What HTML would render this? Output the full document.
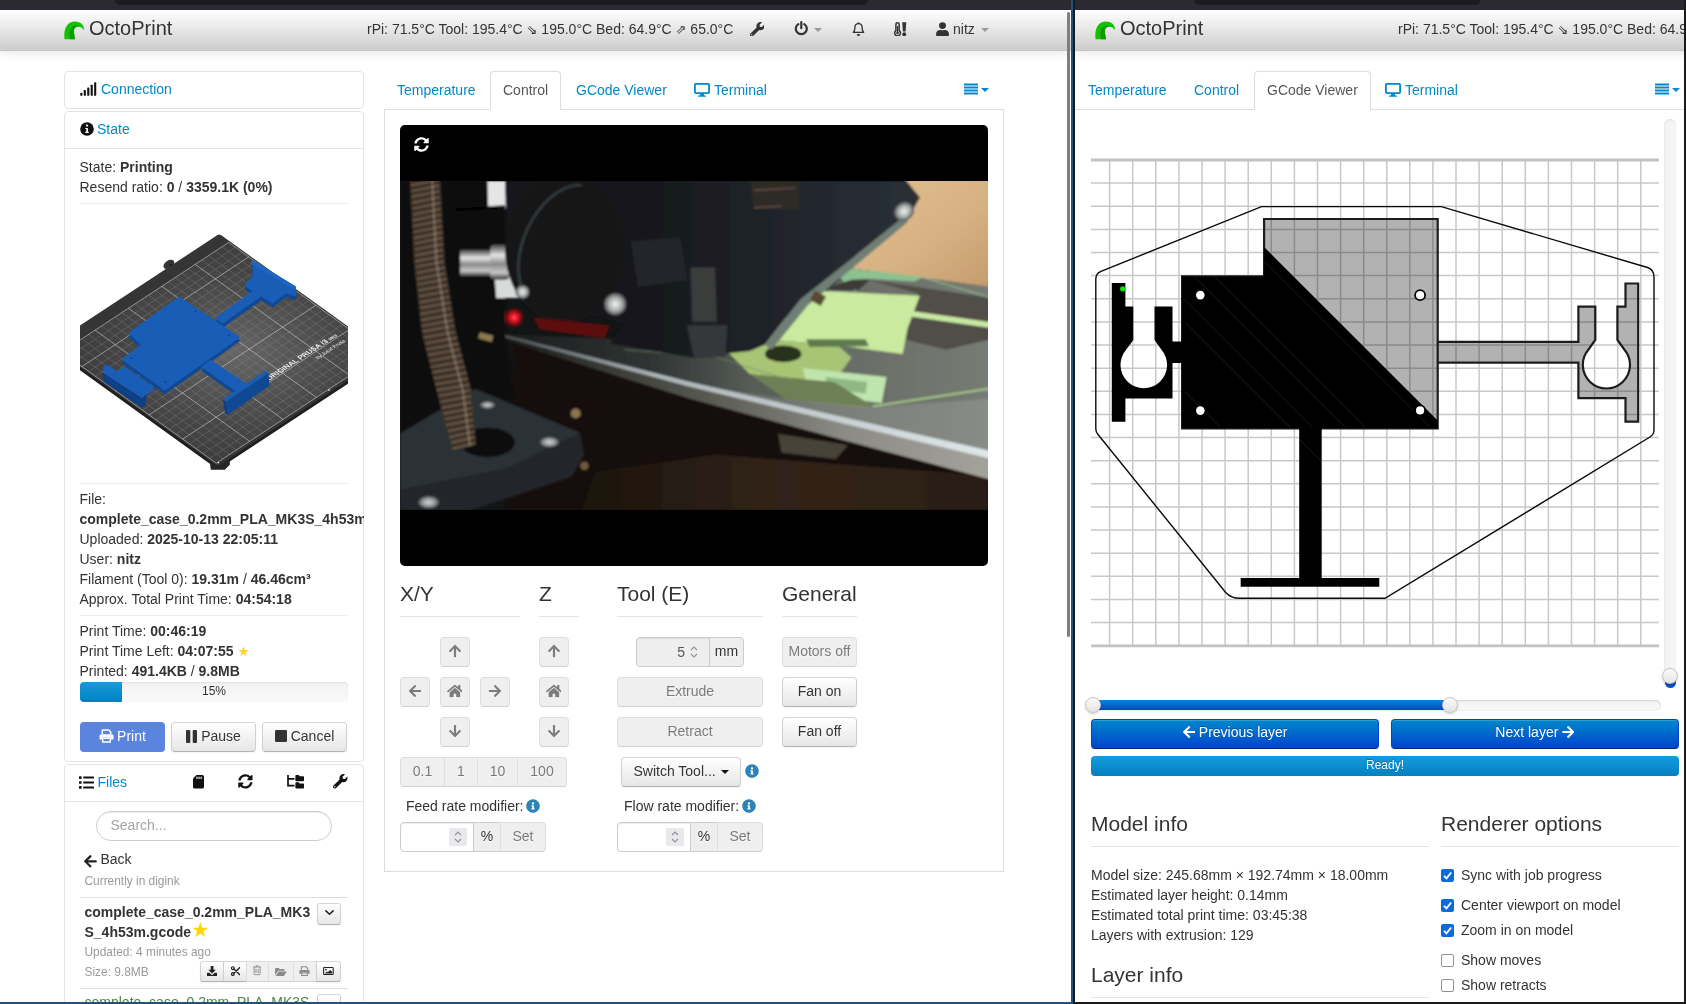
<!DOCTYPE html>
<html lang="en">
<head>
<meta charset="utf-8">
<title>OctoPrint</title>
<style>
*{box-sizing:content-box}
html,body{margin:0;padding:0}
body{width:1686px;height:1004px;overflow:hidden;position:relative;background:#fff;
 font-family:"Liberation Sans",sans-serif;font-size:14px;line-height:20px;color:#333}
a{color:#08c;text-decoration:none}
.abs{position:absolute}
.wrap{position:absolute;width:1686px;height:1004px;will-change:transform}
#chrome-top{left:0;top:0;width:1686px;height:10px;background:#2b2a33}
.ftab{position:absolute;top:0;height:5px;background:#1c1b22;border-radius:0 0 5px 5px}
#L{left:0;top:10px;width:1071px;height:992px;overflow:hidden;background:#fff}
#R{left:1075px;top:10px;width:609px;height:992px;overflow:hidden;background:#fff}
#divblue{left:1071px;top:0;width:2px;height:1004px;background:#24517a}
#divblk{left:1073px;top:0;width:2px;height:1004px;background:#1b1a1a}
#botL{left:0;top:1002px;width:1073px;height:2px;background:#24517a}
#botR{left:1073px;top:1002px;width:613px;height:2px;background:#1b1a1a}
#edgeR{left:1684px;top:0;width:2px;height:1004px;background:#1b1a1a}
/* navbar */
.navbar{position:absolute;top:10px;height:40px;
 background:linear-gradient(to bottom,#ffffff 0%,#cdcdcd 100%);
 border-bottom:1px solid #c6c6c6;box-shadow:0 1px 10px rgba(0,0,0,.12);z-index:5}
.brand{position:absolute;top:0;font-size:20px;line-height:20px;color:#333;white-space:nowrap}
.navtxt{position:absolute;top:9px;white-space:nowrap;color:#333;font-size:14px;line-height:20px}
.ico{position:absolute;display:block}
.arr{font-family:"DejaVu Sans",sans-serif;font-size:13px;line-height:1}
/* sidebar */
.acc{position:absolute;border:1px solid #e5e5e5;border-radius:4px;background:#fff}
.acc-h{position:relative;height:36px}
.acc-h .t{position:absolute;top:8px;white-space:nowrap}
.acc-in{border-top:1px solid #e5e5e5;position:relative}
b,strong{font-weight:bold}
.line{position:absolute;left:15px;white-space:nowrap;height:20px}
.sl{left:79.500px;white-space:nowrap;height:20px}
.shr{left:80px;width:268px;height:0;border-top:1px solid #eee}
.sm{font-size:11.900px;color:#999;white-space:nowrap}
.hr{position:absolute;left:15px;width:268px;height:0;border-top:1px solid #eee}
/* tabs */
.tabs{position:absolute;height:38px;border-bottom:1px solid #ddd}
.tab{position:absolute;top:0;height:36px;padding:0 12px;line-height:36px;border:1px solid transparent;border-radius:4px 4px 0 0;white-space:nowrap}
.tab.active{border-color:#ddd;border-bottom-color:#fff;color:#555;background:#fff;height:37px}
.tabc{position:absolute;border:1px solid #ddd;border-top:0}
.btn{position:absolute;box-sizing:border-box;height:30px;line-height:20px;padding:3px 0 5px;text-align:center;font-size:14px;color:#333;
 text-shadow:0 1px 1px rgba(255,255,255,.75);background:linear-gradient(to bottom,#fff,#e6e6e6);
 border:1px solid #ccc;border-color:#d6d6d6 #d0d0d0 #b3b3b3;border-radius:4px;
 box-shadow:inset 0 1px 0 rgba(255,255,255,.2),0 1px 2px rgba(0,0,0,.05);white-space:nowrap}
.btn.dis{background:#efefef;color:#7a7a7a;box-shadow:none;border-color:#dedede #dedede #cfcfcf;text-shadow:0 1px 1px rgba(255,255,255,.75)}
.btn.pri{padding:2px 0 6px;color:#fff;text-shadow:0 -1px 0 rgba(0,0,0,.25);background:linear-gradient(to bottom,#08c,#04c);border-color:#04c #04c #002a80}
.inp{position:absolute;box-sizing:border-box;height:30px;border:1px solid #ccc;border-radius:4px 0 0 4px;background:#fff;box-shadow:inset 0 1px 1px rgba(0,0,0,.075)}
.inp.dis{background:#eee}
.spbg{position:absolute;top:5px;width:18px;height:18px;background:#e9e9ed;border-radius:2px;z-index:-0}
.inp svg{z-index:2}
.addon{position:absolute;box-sizing:border-box;height:30px;border:1px solid #ccc;background:#eee;text-align:center;line-height:27px;text-shadow:0 1px 0 #fff;color:#333}
.rl{left:1091px;white-space:nowrap;height:20px}
.knob{position:absolute;width:14px;height:14px;border-radius:50%;border:1px solid #c4c4c4;background:linear-gradient(to bottom,#fbfbfb,#e4e4e4);box-shadow:0 1px 2px rgba(0,0,0,.2)}
h1{position:absolute;margin:0;font-size:21px;line-height:35px;font-weight:normal;color:#333;border-bottom:1px solid #e5e5e5;white-space:nowrap;height:40px}
</style>
</head>
<body>
<div id="chrome-top" class="abs"><div class="ftab" style="left:115px;width:753px"></div><div class="ftab" style="left:1194px;width:286px"></div></div>

<!-- ================= LEFT WINDOW ================= -->
<div id="L" class="abs"><div class="wrap" style="left:0;top:-10px">
 <div class="navbar" id="navL" style="left:0;width:1071px">
  <svg class="ico" style="left:64px;top:11px" width="21" height="19" viewBox="0 0 21 19"><path d="M0.6,18.3 C-0.8,8 3,0.6 11,0.4 C16.5,0.3 20.3,4.2 20.3,9.3 C17.6,5.6 14.2,5.2 11.8,6.6 C9.2,8.2 10,12 11.2,18.3 Z" fill="#13c100"/><path d="M6.2,18.3 C4.6,12 5.2,7 9.2,5 C11.2,4 13.4,4 15.4,4.9 C12.2,5 9.8,6.6 9.6,9.2 C9.7,12 10.4,15 11.2,18.3 Z" fill="#0f9b00"/></svg>
  <div class="brand" style="left:89px;top:8px">OctoPrint</div>
  <div class="navtxt" style="left:367px">rPi: 71.5°C Tool: 195.4°C <span class="arr">⇘</span> 195.0°C Bed: 64.9°C <span class="arr">⇗</span> 65.0°C</div>
  <svg class="ico" style="left:749.5px;top:11.8px" width="14.6" height="14.6" viewBox="0 0 512 512"><path fill="#333" d="M507.73 109.1c-2.24-9.03-13.54-12.09-20.12-5.51l-74.36 74.36-67.88-11.31-11.31-67.88 74.36-74.36c6.62-6.62 3.43-17.9-5.66-20.16-47.38-11.74-99.55.91-136.58 37.93-39.64 39.64-50.55 97.1-34.05 147.2L18.74 402.76c-24.99 24.99-24.99 65.51 0 90.5 24.99 24.99 65.51 24.99 90.5 0l213.21-213.21c50.12 16.71 107.47 5.68 147.37-34.22 37.07-37.07 49.7-89.32 37.91-136.73zM64 472c-13.25 0-24-10.75-24-24 0-13.26 10.75-24 24-24s24 10.74 24 24c0 13.25-10.750 24-24 24z"/></svg>
  <svg class="ico" style="left:793.6px;top:11.2px" width="14.6" height="14.6" viewBox="0 0 14.6 14.6"><path d="M4.3,3.1 A5.5,5.5 0 1 0 10.3,3.1" fill="none" stroke="#333" stroke-width="2.2" stroke-linecap="round"/><path d="M7.3,1.1 V7.2" stroke="#333" stroke-width="2.2" stroke-linecap="round"/></svg>
  <svg class="ico" style="left:814px;top:18px" width="8" height="4" viewBox="0 0 8 4"><path d="M0,0H8L4,4Z" fill="#9a9a9a"/></svg>
  <svg class="ico" style="left:851.5px;top:11.6px" width="13" height="14.6" viewBox="0 0 13 14.6"><path d="M6.5,1.7 C8.9,1.7 10.1,3.5 10.1,5.6 C10.1,7.9 10.5,9.3 11.7,10.4 H1.3 C2.5,9.3 2.9,7.9 2.9,5.6 C2.9,3.500 4.1,1.7 6.5,1.7Z" fill="none" stroke="#333" stroke-width="1.35" stroke-linejoin="round"/><circle cx="6.5" cy="1.1" r="0.9" fill="#333"/><path d="M4.7,12.300 H8.3 A1.8,1.8 0 0 1 4.7,12.3Z" fill="#333"/></svg>
  <svg class="ico" style="left:893.6px;top:11.8px" width="13.2" height="14.4" viewBox="0 0 13.2 14.4"><path d="M1.9,8.6 V2.4 A1.65,1.65 0 0 1 5.2,2.4 V8.6 A2.9,2.9 0 1 1 1.9,8.6Z" fill="none" stroke="#333" stroke-width="1.5"/><path d="M3.55,4 V10.5" stroke="#333" stroke-width="1.2"/><circle cx="3.55" cy="10.9" r="1.3" fill="#333"/><path d="M8.2,0.200 H12.300 L11.6,9.4 H8.9Z" fill="#333"/><circle cx="10.25" cy="12.300" r="1.95" fill="#333"/></svg>
  <svg class="ico" style="left:936px;top:11.8px" width="13" height="14.4" viewBox="0 0 13 14.4"><circle cx="6.5" cy="3.600" r="3.45" fill="#333"/><path d="M0.1,13 V11.9 C0.1,9.5 1.9,7.9 4.200,7.900 H4.6 C5.800,8.450 7.200,8.450 8.400,7.900 H8.800 C11.100,7.900 12.900,9.500 12.900,11.900 V13 A1.3,1.3 0 0 1 11.6,14.300 H1.400 A1.3,1.3 0 0 1 0.100,13Z" fill="#333"/></svg>
  <div class="navtxt" style="left:953px">nitz</div>
  <svg class="ico" style="left:981px;top:18px" width="8" height="4" viewBox="0 0 8 4"><path d="M0,0H8L4,4Z" fill="#9a9a9a"/></svg>
 </div>
 <div id="sideL">
  <!-- Connection -->
  <div class="acc" style="left:64px;top:71px;width:298px;height:36px">
   <svg class="ico" style="left:15px;top:9.800px" width="17.300" height="14" viewBox="0 0 18 15" preserveAspectRatio="none"><g fill="#111"><rect x="0.300" y="11.400" width="2.200" height="3.300" rx="0.500"/><rect x="3.900" y="8.600" width="2.200" height="6.100" rx="0.500"/><rect x="7.500" y="5.800" width="2.200" height="8.900" rx="0.500"/><rect x="11.100" y="3" width="2.200" height="11.700" rx="0.500"/><rect x="14.700" y="0.300" width="2.200" height="14.400" rx="0.500"/></g></svg>
   <a class="abs" style="left:36px;top:7px;white-space:nowrap">Connection</a>
  </div>
  <!-- State -->
  <div class="acc" style="left:64px;top:111px;width:298px;height:649px">
   <svg class="ico" style="left:14.800px;top:10px" width="14" height="14" viewBox="0 0 14 14"><circle cx="7" cy="7" r="6.800" fill="#111"/><circle cx="7" cy="3.600" r="1.150" fill="#fff"/><path d="M5.300,5.900 H7.900 V9.700 H8.800 V10.900 H5.300 V9.700 H6.200 V7.100 H5.300Z" fill="#fff"/></svg>
   <a class="abs" style="left:32px;top:7px;white-space:nowrap">State</a>
   <div class="abs" style="left:0;top:36px;width:298px;height:0;border-top:1px solid #e5e5e5"></div>
  </div>
  <div class="abs sl" style="top:157px">State: <b>Printing</b></div>
  <div class="abs sl" style="top:177px">Resend ratio: <b>0</b> / <b>3359.1K (0%)</b></div>
  <div class="abs shr" style="top:203px"></div>
  <div id="thumb" class="abs" style="left:0;top:0"><svg class="ico" style="left:80px;top:210px" width="268" height="268" viewBox="80 210 268 268"><defs><clipPath id="tclip"><rect x="80" y="210" width="268" height="268"/></clipPath><radialGradient id="tglow" cx="0.55" cy="0.5" r="0.55"><stop offset="0" stop-color="#666"/><stop offset="0.6" stop-color="#474747"/><stop offset="1" stop-color="#3a3a3a"/></radialGradient></defs><g clip-path="url(#tclip)"><polygon points="219.2,240.7 382.0,357.8 217.8,465.7 55.0,348.6" fill="#1f1f1f" stroke="#1f1f1f" stroke-width="6" stroke-linejoin="round"/><polygon points="209.8,461.7 229.8,455.7 229.8,464.7 224.8,469.7 210.8,469.7" fill="#262626" /><polygon points="219.2,237.5 382.0,354.6 217.8,462.5 55.0,345.4" fill="#353535" stroke="#353535" stroke-width="6" stroke-linejoin="round"/><ellipse cx="169.9" cy="262.9" rx="6" ry="3.800" fill="#353535" transform="rotate(-33 171.9 265.4)"/><circle cx="170.9" cy="264.9" r="1" fill="#111"/><ellipse cx="60.1" cy="335.0" rx="6" ry="3.800" fill="#353535" transform="rotate(-33 62.1 337.5)"/><circle cx="61.1" cy="337.0" r="1" fill="#111"/><polygon points="228.6,242.4 383.2,353.6 216.3,463.2 61.7,352.1" fill="url(#tglow)" /><path d="M376.5,348.7L209.6,458.4M369.7,343.9L202.9,453.6M363.0,339.1L196.1,448.7M356.3,334.2L189.4,443.9M342.8,324.6L176.0,434.2M336.1,319.7L169.2,429.4M329.4,314.9L162.5,424.6M322.7,310.1L155.8,419.7M309.2,300.4L142.4,410.1M302.5,295.6L135.6,405.2M295.8,290.7L128.9,400.4M289.1,285.9L122.2,395.6M275.6,276.3L108.8,385.9M268.9,271.4L102.0,381.1M262.2,266.6L95.3,376.3M255.5,261.8L88.6,371.4M242.0,252.1L75.1,361.8M235.3,247.3L68.4,356.9M68.4,347.7L223.0,458.8M75.0,343.3L229.7,454.5M81.7,338.9L236.3,450.1M88.4,334.6L243.0,445.7M101.7,325.8L256.4,436.9M108.4,321.4L263.0,432.5M115.1,317.0L269.7,428.1M121.8,312.6L276.4,423.7M135.1,303.8L289.7,415.0M141.8,299.5L296.4,410.6M148.5,295.1L303.1,406.2M155.1,290.7L309.7,401.8M168.5,281.9L323.1,393.0M175.2,277.5L329.8,388.7M181.8,273.1L336.4,384.3M188.5,268.8L343.1,379.9M201.9,260.0L356.5,371.1M208.5,255.6L363.1,366.7M215.2,251.2L369.8,362.3M221.9,246.8L376.5,357.9" stroke="#8a8a8a" stroke-width="0.450" fill="none" opacity="0.75"/><path d="M383.2,353.6L216.3,463.2M349.6,329.4L182.7,439.1M316.0,305.2L149.1,414.9M282.3,281.1L115.5,390.8M248.7,256.9L81.9,366.6M228.6,242.4L61.7,352.1M61.7,352.1L216.3,463.2M95.1,330.2L249.7,441.3M128.4,308.2L283.1,419.4M161.8,286.3L316.4,397.4M195.2,264.4L349.8,375.5M228.6,242.4L383.2,353.6" stroke="#d8d8d8" stroke-width="0.650" fill="none" opacity="0.85"/><circle cx="329.0" cy="389.9" r="0.900" fill="#ddd"/><circle cx="218.3" cy="462.6" r="0.900" fill="#ddd"/><circle cx="379.6" cy="354.3" r="0.900" fill="#ddd"/><g transform="matrix(0.8357 -0.5492 0.8120 0.5837 269.3 380.7)" font-family="Liberation Sans, sans-serif" fill="#f2f2f2"><text x="0" y="0" font-size="7.300" font-weight="bold">ORIGINAL PRUSA i3 <tspan font-size="4.200">MK3</tspan></text><text x="49" y="9.400" font-size="5">by Josef Prusa</text></g><polygon points="215.0,321.6 254.0,293.6 262.4,299.2 222.5,327.4" fill="#114894" stroke="#114894" stroke-width="0.600"/><polygon points="252.7,263.8 295.9,290.0 295.9,300.1 286.0,297.1 272.5,307.1 245.5,290.1 245.5,286.6 252.7,281.1" fill="#114894" stroke="#114894" stroke-width="0.600"/><polygon points="201.1,370.3 210.8,363.4 248.5,388.5 237.3,396.0" fill="#114894" stroke="#114894" stroke-width="0.600"/><polygon points="179.1,300.2 240.0,340.8 207.5,364.1 164.7,394.1 121.5,362.8 141.0,348.4 128.3,336.6" fill="#114894" stroke="#114894" stroke-width="0.600"/><polygon points="102.9,372.5 141.8,398.0 146.9,393.9 145.2,406.6 141.8,407.5 102.9,381.2" fill="#0e3f84" /><path d="M102.900,376.500 L141.800,402.500" stroke="#114894" stroke-width="0.800"/><polygon points="215.0,318.0 254.0,290.0 262.4,295.6 222.5,323.8" fill="#1a5db6" /><polygon points="252.7,260.2 295.9,286.4 295.9,296.5 286.0,293.5 272.5,303.5 245.5,286.5 245.5,283.0 252.7,277.5" fill="#1a5db6" /><polygon points="201.1,366.7 210.8,359.8 248.5,384.9 237.3,392.4" fill="#1a5db6" /><polygon points="179.1,296.6 240.0,337.2 207.5,360.5 164.7,390.5 121.5,359.2 141.0,344.8 128.3,333.0" fill="#1a5db6" /><polygon points="102.9,366.8 107.9,364.8 116.4,371.1 124.9,366.8 154.5,387.1 151.1,392.2 146.9,393.9 141.8,398.0 102.9,372.5" fill="#1a5db6" /><polygon points="222.8,399.6 265.5,370.5 268.5,372.9 226.2,401.6" fill="#1a5db6" /><polygon points="226.2,401.6 268.5,372.9 269.4,385.7 228.1,414.7" fill="#114894" /><polygon points="226.2,401.6 228.1,414.7 225.0,412.5 222.8,399.6" fill="#0e3f84" /><polygon points="252.7,260.2 295.9,286.4 293.0,289.0 250.0,263.0" fill="#1e66c4" /><circle cx="195.6" cy="311.5" r="0.900" fill="#0e3f84"/><circle cx="229.3" cy="335.5" r="0.900" fill="#0e3f84"/><circle cx="131.6" cy="358" r="0.900" fill="#0e3f84"/><circle cx="165.3" cy="381.8" r="0.900" fill="#0e3f84"/></g></svg></div>
  <div class="abs shr" style="top:483px"></div>
  <div class="abs sl" style="top:489px">File:</div>
  <div class="abs sl" style="top:509px;width:284px;overflow:hidden"><b>complete_case_0.2mm_PLA_MK3S_4h53m.gcode</b></div>
  <div class="abs sl" style="top:529px">Uploaded: <b>2025-10-13 22:05:11</b></div>
  <div class="abs sl" style="top:549px">User: <b>nitz</b></div>
  <div class="abs sl" style="top:569px">Filament (Tool 0): <b>19.31m</b> / <b>46.46cm³</b></div>
  <div class="abs sl" style="top:589px">Approx. Total Print Time: <b>04:54:18</b></div>
  <div class="abs shr" style="top:615px"></div>
  <div class="abs sl" style="top:621px">Print Time: <b>00:46:19</b></div>
  <div class="abs sl" style="top:641px">Print Time Left: <b>04:07:55</b> <span style="color:#ffd21f;font-family:'DejaVu Sans',sans-serif;font-size:13.500px">★</span></div>
  <div class="abs sl" style="top:661px">Printed: <b>491.4KB</b> / <b>9.8MB</b></div>
  <div class="abs" style="left:80px;top:682px;width:268px;height:20px;border-radius:4px;background:linear-gradient(to bottom,#f3f3f3,#f9f9f9);box-shadow:inset 0 1px 2px rgba(0,0,0,.08);overflow:hidden">
    <div class="abs" style="left:0;top:0;width:42px;height:20px;background:linear-gradient(to bottom,#149bdf,#0480be)"></div>
    <div class="abs" style="left:0;top:0;width:268px;text-align:center;font-size:12px;line-height:19px;color:#333">15%</div>
  </div>
  <div class="abs" style="left:80px;top:722px;width:85px;height:30px;border-radius:4px;background:#5a84de;color:#fff;text-align:center;line-height:29px;white-space:nowrap"><svg width="15" height="14" viewBox="0 0 15 14" style="vertical-align:-2px;margin-right:3px"><path d="M3.300,5 V1 H9.700 L11.700,3 V5" fill="none" stroke="#fff" stroke-width="1.500" stroke-linejoin="round"/><path d="M2.200,5.200 H12.800 A1.700,1.700 0 0 1 14.500,6.900 V10.600 H12 V8.600 H3 V10.600 H0.500 V6.900 A1.700,1.700 0 0 1 2.200,5.200Z" fill="#fff"/><rect x="3.700" y="9.300" width="7.600" height="3.600" fill="none" stroke="#fff" stroke-width="1.500" stroke-linejoin="round"/></svg>Print</div>
  <div class="btn" style="left:171px;top:722px;width:85px"><svg width="11" height="13" viewBox="0 0 11 13" style="vertical-align:-1.500px;margin-right:4px"><rect x="0" y="0" width="4.300" height="13" rx="1" fill="#333"/><rect x="6.700" y="0" width="4.300" height="13" rx="1" fill="#333"/></svg>Pause</div>
  <div class="btn" style="left:262px;top:722px;width:85px"><svg width="12" height="12" viewBox="0 0 12 12" style="vertical-align:-1px;margin-right:4px"><rect x="0" y="0" width="12" height="12" rx="1.200" fill="#333"/></svg>Cancel</div>
  <!-- Files -->
  <div class="acc" style="left:64px;top:764px;width:298px;height:300px">
   <svg class="ico" style="left:14px;top:11px" width="15" height="13" viewBox="0 0 15 13"><g fill="#111"><rect x="0" y="0.300" width="2.600" height="2.600" rx="0.500"/><rect x="0" y="5.200" width="2.600" height="2.600" rx="0.500"/><rect x="0" y="10.100" width="2.600" height="2.600" rx="0.500"/><rect x="4.200" y="0.600" width="10.800" height="2" rx="0.500"/><rect x="4.200" y="5.500" width="10.800" height="2" rx="0.500"/><rect x="4.200" y="10.400" width="10.800" height="2" rx="0.500"/></g></svg>
   <a class="abs" style="left:32.500px;top:7px;white-space:nowrap">Files</a>
   <div class="abs" style="left:0;top:36px;width:298px;height:0;border-top:1px solid #e5e5e5"></div>
  </div>
  <div class="abs" style="left:96px;top:811px;width:234px;height:28px;border:1px solid #ccc;border-radius:15px;box-shadow:inset 0 1px 1px rgba(0,0,0,.075)"><span class="abs" style="left:13.500px;top:3px;color:#a5a5a5;white-space:nowrap">Search...</span></div>
  <div class="abs" style="left:100.500px;top:849px;white-space:nowrap;color:#333">Back</div>
  <div class="abs sm" style="left:84.500px;top:871px">Currently in digink</div>
  <div class="abs shr" style="top:897px;border-top-color:#ddd"></div>
  <div class="abs" style="left:84.500px;top:902px;white-space:nowrap"><b>complete_case_0.2mm_PLA_MK3</b></div>
  <div class="abs" style="left:84.500px;top:922px;white-space:nowrap"><b>S_4h53m.gcode</b></div>
  <div class="abs sm" style="left:84.500px;top:942px">Updated: 4 minutes ago</div>
  <div class="abs sm" style="left:84.500px;top:962px">Size: 9.8MB</div>
  <div class="abs shr" style="top:988px;border-top-color:#ddd"></div>
  <div class="abs" style="left:84.500px;top:992px;white-space:nowrap;color:#468847">complete_case_0.2mm_PLA_MK3S</div>
  <svg class="ico" style="left:193px;top:775px" width="11" height="13.600" viewBox="0 0 11 13.600"><path d="M3.400,0 H9.400 A1.600,1.600 0 0 1 11,1.600 V12 A1.600,1.600 0 0 1 9.400,13.600 H1.600 A1.600,1.600 0 0 1 0,12 V3.400Z" fill="#111"/><g fill="#fff"><rect x="3.400" y="1.700" width="1.100" height="2.300"/><rect x="5.500" y="1.700" width="1.100" height="2.300"/><rect x="7.600" y="1.700" width="1.100" height="2.300"/></g></svg>
  <svg class="ico" style="left:238.400px;top:774.400px" width="14.800" height="14.800" viewBox="0 0 512 512"><path fill="#111" d="M370.72 133.28C339.458 104.008 298.888 87.962 255.848 88c-77.458.068-144.328 53.178-162.791 126.85-1.344 5.363-6.122 9.15-11.651 9.15H24.103c-7.498 0-13.194-6.807-11.807-14.176C33.933 94.924 134.813 8 256 8c66.448 0 126.791 26.136 171.315 68.685L463.03 40.97C478.149 25.851 504 36.559 504 57.941V192c0 13.255-10.745 24-24 24H345.941c-21.382 0-32.09-25.851-16.971-40.971l41.75-41.749zM32 296h134.059c21.382 0 32.09 25.851 16.971 40.971l-41.75 41.75c31.262 29.273 71.835 45.319 114.876 45.28 77.418-.07 144.315-53.144 162.787-126.849 1.344-5.363 6.122-9.15 11.651-9.15h57.304c7.498 0 13.194 6.807 11.807 14.176C478.067 417.076 377.187 504 256 504c-66.448 0-126.791-26.136-171.315-68.685L48.97 471.03C33.851 486.149 8 475.441 8 454.059V320c0-13.255 10.745-24 24-24z"/></svg>
  <svg class="ico" style="left:287px;top:775px" width="17" height="13.600" viewBox="0 0 17 13.600"><path d="M1,0 V10.600 H7.500 M1,3.800 H7.500" fill="none" stroke="#111" stroke-width="1.700"/><path d="M8.400,0.900 A0.800,0.800 0 0 1 9.200,0.100 H11.600 L12.700,1.200 H16.200 A0.800,0.800 0 0 1 17,2 V5.500 A0.800,0.800 0 0 1 16.200,6.300 H9.200 A0.800,0.800 0 0 1 8.400,5.500Z M8.400,8.100 A0.800,0.800 0 0 1 9.200,7.300 H11.600 L12.700,8.400 H16.200 A0.800,0.800 0 0 1 17,9.200 V12.700 A0.800,0.800 0 0 1 16.200,13.500 H9.200 A0.800,0.800 0 0 1 8.400,12.700Z" fill="#111"/></svg>
  <svg class="ico" style="left:333.300px;top:774.400px" width="14.600" height="14.600" viewBox="0 0 512 512"><path fill="#111" d="M507.73 109.1c-2.24-9.03-13.54-12.09-20.12-5.51l-74.36 74.36-67.88-11.31-11.31-67.88 74.36-74.36c6.62-6.62 3.43-17.9-5.66-20.16-47.38-11.74-99.55.91-136.58 37.93-39.64 39.64-50.55 97.1-34.05 147.2L18.74 402.76c-24.99 24.99-24.99 65.51 0 90.5 24.99 24.99 65.51 24.99 90.5 0l213.21-213.21c50.12 16.71 107.47 5.68 147.37-34.22 37.07-37.07 49.7-89.32 37.91-136.73zM64 472c-13.25 0-24-10.75-24-24 0-13.26 10.75-24 24-24s24 10.74 24 24c0 13.25-10.75 24-24 24z"/></svg>
  <svg class="ico" style="left:84.300px;top:853.500px" width="12.800" height="14.600" viewBox="0 0 448 512"><path fill="#222" d="M257.5 445.1l-22.2 22.2c-9.4 9.4-24.6 9.4-33.9 0L7 273c-9.4-9.4-9.4-24.6 0-33.9L201.4 44.7c9.4-9.4 24.6-9.4 33.9 0l22.2 22.2c9.5 9.5 9.3 25-.4 34.3L136.6 216H424c13.3 0 24 10.7 24 24v32c0 13.3-10.7 24-24 24H136.6l120.5 114.8c9.8 9.3 10 24.8.4 34.3z"/></svg>
  <svg class="ico" style="left:192.300px;top:922.400px" width="16.600" height="16.600" viewBox="0 0 15.800 15.800"><polygon fill="#ffd600" points="7.90,0.00 9.72,5.39 15.41,5.46 10.85,8.86 12.54,14.29 7.90,11.00 3.26,14.29 4.95,8.86 0.39,5.46 6.08,5.39"/></svg>
  <div class="btn" style="left:317px;top:903px;width:24px;height:22px;border-radius:3px;padding:0"><svg width="9" height="5.400" viewBox="0 0 10 6" style="position:absolute;left:6.500px;top:6px"><path d="M1,1 L5,4.800 L9,1" fill="none" stroke="#222" stroke-width="1.700" stroke-linecap="round" stroke-linejoin="round"/></svg></div>
  <div class="abs" id="fbtns" style="left:200px;top:961px;width:141px;height:21px">
   <div class="btn" style="left:0;top:0;width:24px;height:21px;border-radius:3px 0 0 3px;padding:0"><svg width="10.200" height="10.200" viewBox="0 0 11 11" style="position:absolute;left:5.500px;top:3.800px"><path d="M4,0 H7 V4 H9.600 L5.500,8 L1.400,4 H4Z" fill="#222"/><path d="M0,7.200 H2.600 L5.500,9.900 L8.400,7.200 H11 V10.400 A0.600,0.600 0 0 1 10.400,11 H0.600 A0.600,0.600 0 0 1 0,10.400Z" fill="#222"/></svg></div>
   <div class="btn" style="left:23px;top:0;width:24px;height:21px;border-radius:0;padding:0"><svg width="9.200" height="10.200" viewBox="0 0 10 11" style="position:absolute;left:6.500px;top:4px"><circle cx="2" cy="2.300" r="1.500" fill="none" stroke="#222" stroke-width="1.300"/><circle cx="2" cy="8.700" r="1.500" fill="none" stroke="#222" stroke-width="1.300"/><path d="M3.200,3.200 L9.600,9.400 M3.200,7.800 L9.600,1.600" stroke="#222" stroke-width="1.500" stroke-linecap="round"/></svg></div>
   <div class="btn dis" style="left:46px;top:0;width:23px;height:21px;border-radius:0;padding:0"><svg width="8.200" height="10.400" viewBox="0 0 9 11" style="position:absolute;left:6.200px;top:3.200px"><path d="M1.200,2.200 V9.600 A0.800,0.800 0 0 0 2,10.400 H7 A0.800,0.800 0 0 0 7.800,9.600 V2.200 M0,2 H9 M3,1.800 L3.600,0.500 H5.400 L6,1.800 M3.300,4 V8.600 M5.700,4 V8.600" fill="none" stroke="#8a8a8a" stroke-width="1"/></svg></div>
   <div class="btn dis" style="left:68px;top:0;width:26px;height:21px;border-radius:0;padding:0"><svg width="11.800" height="8.200" viewBox="0 0 13 10" preserveAspectRatio="none" style="position:absolute;left:6px;top:5.500px"><path d="M0,1 A1,1 0 0 1 1,0 H4 L5.200,1.200 H9.600 A1,1 0 0 1 10.600,2.200 V3.300 H3.600 L0,8.600Z" fill="#8a8a8a"/><path d="M3.900,4.300 H13 L10.200,9.300 A1,1 0 0 1 9.400,9.800 H0.700Z" fill="#8a8a8a"/></svg></div>
   <div class="btn dis" style="left:93px;top:0;width:24px;height:21px;border-radius:0;padding:0"><svg width="11" height="10.400" viewBox="0 0 15 14" style="position:absolute;left:5px;top:3.600px"><path d="M3.300,5 V1 H9.700 L11.700,3 V5" fill="none" stroke="#8a8a8a" stroke-width="1.500"/><path d="M2.200,5.200 H12.800 A1.700,1.700 0 0 1 14.500,6.900 V10.600 H12 V8.600 H3 V10.600 H0.500 V6.900 A1.700,1.700 0 0 1 2.200,5.200Z" fill="#8a8a8a"/><rect x="3.700" y="9.300" width="7.600" height="3.600" fill="none" stroke="#8a8a8a" stroke-width="1.500"/></svg></div>
   <div class="btn" style="left:116px;top:0;width:25px;height:21px;border-radius:0 3px 3px 0;padding:0"><svg width="10.800" height="8" viewBox="0 0 12 9" style="position:absolute;left:6.300px;top:5.200px"><rect x="0.600" y="0.600" width="10.800" height="7.800" rx="0.800" fill="none" stroke="#222" stroke-width="1.200"/><circle cx="3.200" cy="3" r="0.900" fill="#222"/><path d="M2,7.300 L4.300,5 L5.300,6 L8,3.300 L10.200,5.500 V7.300Z" fill="#222"/></svg></div>
  </div>
  <div class="btn" style="left:317px;top:994px;width:24px;height:22px;border-radius:3px;padding:0"></div>
 </div>
 <div id="mainL">
  <div class="tabs" style="left:384px;top:71px;width:620px">
   <a class="tab" style="left:0">Temperature</a>
   <a class="tab active" style="left:106px">Control</a>
   <a class="tab" style="left:179px">GCode Viewer</a>
   <a class="tab" style="left:297px"><svg width="16" height="14" viewBox="0 0 16 14" style="vertical-align:-2px;margin-right:4px"><rect x="0.900" y="0.900" width="14.200" height="9.200" rx="1" fill="none" stroke="#08c" stroke-width="1.800"/><path d="M6.300,10.500 H9.700 L10.200,12.400 H12 V13.800 H4 V12.400 H5.800Z" fill="#08c"/></svg>Terminal</a>
   <svg class="ico" style="left:580px;top:12px" width="26" height="12" viewBox="0 0 26 12"><g fill="#08c"><rect x="0" y="0.500" width="14" height="2"/><rect x="0" y="3.500" width="14" height="2"/><rect x="0" y="6.500" width="14" height="2"/><rect x="0" y="9.500" width="14" height="2"/><path d="M17,5 H25 L21,9Z"/></g></svg>
  </div>
  <div class="tabc" style="left:384px;top:110px;width:618px;height:761px"></div>
  <div class="abs" id="webcam" style="left:400px;top:125px;width:588px;height:441px;background:#000;border-radius:5px;overflow:hidden">
   <svg class="ico" style="left:14px;top:11.500px" width="15" height="15" viewBox="0 0 512 512"><path fill="#fff" d="M370.72 133.28C339.458 104.008 298.888 87.962 255.848 88c-77.458.068-144.328 53.178-162.791 126.85-1.344 5.363-6.122 9.15-11.651 9.15H24.103c-7.498 0-13.194-6.807-11.807-14.176C33.933 94.924 134.813 8 256 8c66.448 0 126.791 26.136 171.315 68.685L463.03 40.97C478.149 25.851 504 36.559 504 57.941V192c0 13.255-10.745 24-24 24H345.941c-21.382 0-32.09-25.851-16.971-40.971l41.75-41.749zM32 296h134.059c21.382 0 32.09 25.851 16.971 40.971l-41.75 41.75c31.262 29.273 71.835 45.319 114.876 45.28 77.418-.07 144.315-53.144 162.787-126.849 1.344-5.363 6.122-9.15 11.651-9.15h57.304c7.498 0 13.194 6.807 11.807 14.176C478.067 417.076 377.187 504 256 504c-66.448 0-126.791-26.136-171.315-68.685L48.97 471.03C33.851 486.149 8 475.441 8 454.059V320c0-13.255 10.745-24 24-24z"/></svg>
   <div id="camimg" class="abs" style="left:0;top:56px;width:588px;height:329px;overflow:hidden"><svg class="ico" style="left:0;top:0" width="588" height="329" viewBox="0 18 1680 940" preserveAspectRatio="none"><defs>
<linearGradient id="cwood" x1="0" y1="0" x2="1" y2="1"><stop offset="0" stop-color="#e2c193"/><stop offset="0.6" stop-color="#d6b081"/><stop offset="1" stop-color="#c49b6c"/></linearGradient>
<linearGradient id="cbed" gradientUnits="userSpaceOnUse" x1="300" y1="0" x2="1680" y2="0"><stop offset="0" stop-color="#1b1e1d"/><stop offset="0.3" stop-color="#2f3332"/><stop offset="0.5" stop-color="#555a55"/><stop offset="0.7" stop-color="#686c66"/><stop offset="1" stop-color="#777b74"/></linearGradient>
<linearGradient id="cedge" gradientUnits="userSpaceOnUse" x1="300" y1="0" x2="1680" y2="0"><stop offset="0" stop-color="#4b5052"/><stop offset="0.3" stop-color="#aab4b8"/><stop offset="1" stop-color="#dfe7ea"/></linearGradient>
<linearGradient id="cside" gradientUnits="userSpaceOnUse" x1="300" y1="0" x2="1680" y2="0"><stop offset="0" stop-color="#1a1b1a"/><stop offset="0.4" stop-color="#55564f"/><stop offset="0.7" stop-color="#8b8b84"/><stop offset="1" stop-color="#a3a39b"/></linearGradient>
<linearGradient id="cfloor" gradientUnits="userSpaceOnUse" x1="500" y1="0" x2="1680" y2="0"><stop offset="0" stop-color="#1a120c"/><stop offset="0.5" stop-color="#33241a"/><stop offset="1" stop-color="#2a1e16"/></linearGradient>
<linearGradient id="ccyl" x1="0" y1="0" x2="0" y2="1"><stop offset="0" stop-color="#444"/><stop offset="0.3" stop-color="#e6e6e6"/><stop offset="0.55" stop-color="#8a8a8a"/><stop offset="0.8" stop-color="#c8c8c8"/><stop offset="1" stop-color="#333"/></linearGradient>
<linearGradient id="cshroud" gradientUnits="userSpaceOnUse" x1="700" y1="0" x2="1450" y2="0"><stop offset="0" stop-color="#16181b"/><stop offset="0.5" stop-color="#20242a"/><stop offset="1" stop-color="#2a2f36"/></linearGradient>
<radialGradient id="cled"><stop offset="0" stop-color="#ff5a6e"/><stop offset="0.25" stop-color="#ff1a2a"/><stop offset="1" stop-color="#ff0000" stop-opacity="0"/></radialGradient>
<radialGradient id="cscrew"><stop offset="0" stop-color="#f4f4f4"/><stop offset="0.6" stop-color="#a9adad"/><stop offset="1" stop-color="#4a4c4c"/></radialGradient>
<filter id="cblur" x="-2%" y="-2%" width="104%" height="104%"><feGaussianBlur stdDeviation="2.600"/></filter>
<filter id="cblur2" x="-10%" y="-10%" width="120%" height="120%"><feGaussianBlur stdDeviation="7"/></filter>
<clipPath id="cclip"><rect x="0" y="18" width="1680" height="940"/></clipPath>
</defs><g clip-path="url(#cclip)"><rect x="0" y="18" width="1680" height="940" fill="#121416"/><g filter="url(#cblur)"><polygon points="330,470 1680,800 1680,958 300,958" fill="#15110d" /><polygon points="560,850 900,800 1680,860 1680,958 520,958" fill="url(#cfloor)" /><polygon points="1440,10 1690,10 1690,322 1286,267 1300,232 1400,150 1464,102 1485,65" fill="url(#cwood)" /><polygon points="290,455 620,470 1000,500 1180,370 1290,268 1690,320 1690,800 829,598" fill="url(#cbed)" /><polygon points="1340,300 1690,352 1690,470 1560,500 1440,470 1480,340" fill="#514e4a" /><polygon points="1255,292 1290,268 1495,292 1470,305 1345,298 1300,335" fill="#8cc190" /><polygon points="1200,330 1290,300 1345,298 1310,330" fill="#3d3a36" /><polygon points="1060,440 1150,372 1185,331 1485,346 1450,440 1436,512 1250,487 1040,470" fill="#c9ea9f" /><polygon points="930,500 1040,470 1250,487 1290,522 1240,592 1000,570" fill="#a8c474" /><ellipse cx="1095" cy="512" rx="52" ry="24" fill="#27301f"/><polygon points="1160,470 1330,470 1340,490 1170,492" fill="#5f7a4e" /><polygon points="1150,552 1390,578 1376,652 1170,628" fill="#bfe4ae" /><polygon points="1215,578 1335,592 1330,625 1225,612" fill="#8fb884" /><polygon points="1000,570 1240,592 1350,660 1340,668 1100,640" fill="#6d7f55" /><path d="M1445,395 L1690,430" stroke="#c9eaa3" stroke-width="16" fill="none"/><path d="M1350,662 L1690,610" stroke="#a8d088" stroke-width="5" fill="none"/><path d="M1490,292 L1690,352" stroke="#8fc28f" stroke-width="3" fill="none"/><path d="M640,500 L900,520 L1350,662" stroke="#6f8a62" stroke-width="3" fill="none" opacity="0.700"/><polygon points="829,598 1690,800 1690,640 1350,664 1100,640" fill="rgba(255,255,255,0.13)" /><polygon points="290,462 829,603 1690,808 1690,872 829,640 620,575 290,470" fill="url(#cside)" /><polygon points="290,455 829,592 1690,790 1690,812 829,606 290,462" fill="url(#cedge)" /><polygon points="1080,740 1280,772 1245,812 1090,794" fill="#4a4239" /><polygon points="0,18 300,18 300,460 330,640 0,760" fill="#0d0e10" /><polygon points="250,18 300,18 305,96 252,96" fill="#e4e6e6" /><polygon points="270,288 338,288 342,352 275,352" fill="#d9dbdb" /><path d="M160,100 L300,92" stroke="#050505" stroke-width="9"/><rect x="172" y="215" width="135" height="75" fill="url(#ccyl)"/><rect x="258" y="200" width="55" height="100" rx="12" fill="url(#ccyl)"/><polygon points="300,18 1448,18 1482,66 1464,102 1300,232 1144,356 1042,486 1000,504 830,522 600,482 640,425 560,402 430,402 345,345 305,210" fill="url(#cshroud)" /><ellipse cx="470" cy="210" rx="170" ry="215" fill="#121417"/><path d="M350,330 C300,200 420,20 520,30" stroke="#3b4347" stroke-width="8" fill="none" opacity="0.800"/><polygon points="660,190 800,180 820,300 680,320" fill="#24282b" /><polygon points="830,265 900,265 905,420 835,420" fill="#3a3c3c" /><polygon points="1000,18 1140,18 1140,100 1010,95" fill="#2e2a27" /><path d="M1010,45 L1130,38 M1010,95 L1090,90" stroke="#5a4a3e" stroke-width="5"/><polygon points="1144,356 1300,232 1440,120 1452,134 1318,246 1166,372 1062,500 1042,486" fill="#6f7f74" /><polygon points="820,430 935,430 930,520 840,525" fill="#34383a" /><polygon points="380,408 600,430 585,468 400,442" fill="#5d0c0c" /><circle cx="326" cy="408" r="30" fill="url(#cled)"/><circle cx="615" cy="370" r="32" fill="url(#cscrew)"/><circle cx="350" cy="335" r="20" fill="url(#cscrew)"/><ellipse cx="1440" cy="105" rx="30" ry="26" fill="url(#cscrew)" transform="rotate(-35 1440 105)"/><rect x="1176" y="338" width="36" height="30" fill="#5a4830" transform="rotate(30 1194 353)"/><polygon points="0,740 215,612 515,738 525,800 490,862 205,958 0,958" fill="#23272a" /><polygon points="0,740 215,612 515,738 300,840 0,900" fill="#2c3134" /><ellipse cx="250" cy="765" rx="78" ry="42" fill="#090909"/><ellipse cx="250" cy="658" rx="22" ry="11" fill="url(#cscrew)" opacity="0.800"/><ellipse cx="427" cy="764" rx="28" ry="15" fill="url(#cscrew)" opacity="0.850"/><ellipse cx="82" cy="936" rx="30" ry="18" fill="url(#cscrew)" opacity="0.850"/><rect x="225" y="455" width="40" height="18" fill="#8a7a50" transform="rotate(15 245 464)"/><circle cx="502" cy="682" r="14" fill="#8a7350"/><circle cx="527" cy="832" r="12" fill="#6e5a3c"/><polygon points="28,18 40,250 62,450 105,620 150,790 218,772 205,620 160,450 128,250 115,18" fill="#3a2f25" /><path d="M32,30L111,14M33,47L112,31M34,63L113,47M35,80L114,64M36,97L115,81M37,114L116,98M37,130L117,114M38,147L118,131M39,164L119,148M40,181L120,165M41,197L121,181M42,214L122,198M43,231L122,215M43,248L123,232M45,264L125,248M47,281L128,265M48,298L130,282M50,314L133,298M52,331L136,315M54,348L138,332M56,365L141,349M58,381L144,365M59,398L146,382M61,415L149,399M63,432L152,416M65,448L154,432M68,465L158,449M72,482L162,466M76,499L167,483M80,515L171,499M85,532L176,516M89,549L180,533M93,565L184,549M97,582L189,566M102,599L193,583M106,616L198,600M110,632L201,616M115,649L203,633M119,666L204,650M123,683L206,667M128,699L207,683M132,716L209,700M137,733L210,717M141,750L211,734M146,766L213,750M150,783L214,767" stroke="#a8927a" stroke-width="5.500" fill="none" opacity="0.450"/><path d="M92,18 L104,250 L136,450 L180,620 L200,775" stroke="#efe3cc" stroke-width="6" fill="none" opacity="0.280"/></g></g></svg></div>
  </div>
  <h1 style="left:400px;top:576px;width:120px">X/Y</h1>
  <h1 style="left:539px;top:576px;width:40px">Z</h1>
  <h1 style="left:617px;top:576px;width:146px">Tool (E)</h1>
  <h1 style="left:782px;top:576px;width:75px">General</h1>
  <div class="btn dis" style="left:440px;top:637px;width:30px"><svg width="14" height="14" viewBox="-32 0 512 512" style="position:absolute;left:6.500px;top:6px;transform:rotate(90deg)"><path fill="#7c7c7c" d="M257.5 445.1l-22.2 22.2c-9.4 9.4-24.6 9.4-33.9 0L7 273c-9.4-9.4-9.4-24.6 0-33.9L201.4 44.7c9.4-9.4 24.6-9.4 33.9 0l22.2 22.2c9.5 9.5 9.3 25-.4 34.3L136.6 216H424c13.3 0 24 10.7 24 24v32c0 13.3-10.7 24-24 24H136.6l120.5 114.8c9.8 9.3 10 24.8.4 34.3z"/></svg></div><div class="btn dis" style="left:400px;top:677px;width:30px"><svg width="14" height="14" viewBox="-32 0 512 512" style="position:absolute;left:6.500px;top:6px;transform:rotate(0deg)"><path fill="#7c7c7c" d="M257.5 445.1l-22.2 22.2c-9.4 9.4-24.6 9.4-33.9 0L7 273c-9.4-9.4-9.4-24.6 0-33.9L201.4 44.7c9.4-9.4 24.6-9.4 33.9 0l22.2 22.2c9.5 9.5 9.3 25-.4 34.3L136.6 216H424c13.3 0 24 10.7 24 24v32c0 13.3-10.7 24-24 24H136.6l120.5 114.8c9.8 9.3 10 24.8.4 34.3z"/></svg></div><div class="btn dis" style="left:440px;top:677px;width:30px"><svg width="15.8" height="14" viewBox="0 0 576 512" style="position:absolute;left:5.700px;top:5.700px"><path fill="#7c7c7c" d="M280.37 148.26L96 300.11V464a16 16 0 0 0 16 16l112.06-.29a16 16 0 0 0 15.92-16V368a16 16 0 0 1 16-16h64a16 16 0 0 1 16 16v95.64a16 16 0 0 0 16 16.05L464 480a16 16 0 0 0 16-16V300L295.67 148.26a12.190 12.190 0 0 0-15.3 0zM571.6 251.47L488 182.56V44.05a12 12 0 0 0-12-12h-56a12 12 0 0 0-12 12v72.61L318.47 43a48 48 0 0 0-61 0L4.34 251.47a12 12 0 0 0-1.6 16.9l25.5 31A12 12 0 0 0 45.15 301l235.22-193.74a12.190 12.190 0 0 1 15.3 0L530.9 301a12 12 0 0 0 16.9-1.6l25.5-31a12 12 0 0 0-1.7-16.930z"/></svg></div><div class="btn dis" style="left:480px;top:677px;width:30px"><svg width="14" height="14" viewBox="-32 0 512 512" style="position:absolute;left:6.500px;top:6px;transform:rotate(180deg)"><path fill="#7c7c7c" d="M257.5 445.1l-22.2 22.2c-9.4 9.4-24.6 9.4-33.9 0L7 273c-9.4-9.4-9.4-24.6 0-33.9L201.4 44.7c9.4-9.4 24.6-9.4 33.9 0l22.2 22.2c9.5 9.5 9.3 25-.4 34.3L136.6 216H424c13.3 0 24 10.7 24 24v32c0 13.3-10.7 24-24 24H136.6l120.5 114.8c9.8 9.3 10 24.8.4 34.3z"/></svg></div><div class="btn dis" style="left:440px;top:717px;width:30px"><svg width="14" height="14" viewBox="-32 0 512 512" style="position:absolute;left:6.500px;top:6px;transform:rotate(270deg)"><path fill="#7c7c7c" d="M257.5 445.1l-22.2 22.2c-9.4 9.4-24.6 9.4-33.9 0L7 273c-9.4-9.4-9.4-24.6 0-33.9L201.4 44.7c9.4-9.4 24.6-9.4 33.9 0l22.2 22.2c9.5 9.5 9.3 25-.4 34.3L136.6 216H424c13.3 0 24 10.7 24 24v32c0 13.3-10.7 24-24 24H136.6l120.5 114.8c9.8 9.3 10 24.8.4 34.3z"/></svg></div>
  <div class="btn dis" style="left:539px;top:637px;width:30px"><svg width="14" height="14" viewBox="-32 0 512 512" style="position:absolute;left:6.500px;top:6px;transform:rotate(90deg)"><path fill="#7c7c7c" d="M257.5 445.1l-22.2 22.2c-9.4 9.4-24.6 9.4-33.9 0L7 273c-9.4-9.4-9.4-24.6 0-33.9L201.4 44.7c9.4-9.4 24.6-9.4 33.9 0l22.2 22.2c9.5 9.5 9.3 25-.4 34.3L136.6 216H424c13.3 0 24 10.7 24 24v32c0 13.3-10.7 24-24 24H136.6l120.5 114.8c9.8 9.3 10 24.8.4 34.3z"/></svg></div><div class="btn dis" style="left:539px;top:677px;width:30px"><svg width="15.8" height="14" viewBox="0 0 576 512" style="position:absolute;left:5.700px;top:5.700px"><path fill="#7c7c7c" d="M280.37 148.26L96 300.11V464a16 16 0 0 0 16 16l112.06-.29a16 16 0 0 0 15.92-16V368a16 16 0 0 1 16-16h64a16 16 0 0 1 16 16v95.64a16 16 0 0 0 16 16.05L464 480a16 16 0 0 0 16-16V300L295.67 148.26a12.190 12.190 0 0 0-15.3 0zM571.6 251.47L488 182.56V44.05a12 12 0 0 0-12-12h-56a12 12 0 0 0-12 12v72.61L318.47 43a48 48 0 0 0-61 0L4.34 251.47a12 12 0 0 0-1.6 16.9l25.5 31A12 12 0 0 0 45.15 301l235.22-193.74a12.190 12.190 0 0 1 15.3 0L530.9 301a12 12 0 0 0 16.9-1.6l25.5-31a12 12 0 0 0-1.7-16.930z"/></svg></div><div class="btn dis" style="left:539px;top:717px;width:30px"><svg width="14" height="14" viewBox="-32 0 512 512" style="position:absolute;left:6.500px;top:6px;transform:rotate(270deg)"><path fill="#7c7c7c" d="M257.5 445.1l-22.2 22.2c-9.4 9.4-24.6 9.4-33.9 0L7 273c-9.4-9.4-9.4-24.6 0-33.9L201.4 44.7c9.4-9.4 24.6-9.4 33.9 0l22.2 22.2c9.5 9.5 9.3 25-.4 34.3L136.6 216H424c13.3 0 24 10.7 24 24v32c0 13.3-10.7 24-24 24H136.6l120.5 114.8c9.8 9.3 10 24.8.4 34.3z"/></svg></div>
  <div class="btn dis" style="left:400px;top:757px;width:45px;border-radius:4px 0 0 4px">0.1</div>
  <div class="btn dis" style="left:444px;top:757px;width:34px;border-radius:0">1</div>
  <div class="btn dis" style="left:477px;top:757px;width:41px;border-radius:0">10</div>
  <div class="btn dis" style="left:517px;top:757px;width:50px;border-radius:0 4px 4px 0">100</div>
  <div class="abs" style="left:406px;top:796px;white-space:nowrap">Feed rate modifier:</div><svg class="ico" style="left:526px;top:799px" width="14" height="14" viewBox="0 0 512 512"><path fill="#2f82b5" d="M256 8C119.043 8 8 119.083 8 256c0 136.997 111.043 248 248 248s248-111.003 248-248C504 119.083 392.957 8 256 8zm0 110c23.196 0 42 18.804 42 42s-18.804 42-42 42-42-18.804-42-42 18.804-42 42-42zm56 254c0 6.627-5.373 12-12 12h-88c-6.627 0-12-5.373-12-12v-24c0-6.627 5.373-12 12-12h12v-64h-12c-6.627 0-12-5.373-12-12v-24c0-6.627 5.373-12 12-12h64c6.627 0 12 5.373 12 12v100h12c6.627 0 12 5.373 12 12v24z"/></svg>
  <div class="inp" style="left:400px;top:822px;width:74px"><svg width="8" height="14" viewBox="0 0 8 14" style="position:absolute;left:53px;top:7px"><path d="M1,5 L4,2 L7,5 M1,9 L4,12 L7,9" fill="none" stroke="#8f8f9d" stroke-width="1.1"/></svg><span class="spbg" style="left:48px"></span></div>
  <div class="addon" style="left:473px;top:822px;width:28px">%</div>
  <div class="btn dis" style="left:500px;top:822px;width:46px;border-radius:0 4px 4px 0">Set</div>

  <div class="inp dis" style="left:636px;top:637px;width:74px"><span class="abs" style="right:24px;top:4px;color:#555">5</span><svg width="8" height="14" viewBox="0 0 8 14" style="position:absolute;left:53px;top:7px"><path d="M1,5 L4,2 L7,5 M1,9 L4,12 L7,9" fill="none" stroke="#8f8f9d" stroke-width="1.1"/></svg></div>
  <div class="addon" style="left:709px;top:637px;width:35px;border-radius:0 4px 4px 0">mm</div>
  <div class="btn dis" style="left:617px;top:677px;width:146px">Extrude</div>
  <div class="btn dis" style="left:617px;top:717px;width:146px">Retract</div>
  <div class="btn" style="left:621px;top:757px;width:120px">Switch Tool... <svg width="8" height="4" viewBox="0 0 8 4" style="vertical-align:2px;margin-left:1px"><path d="M0,0H8L4,4Z" fill="#111"/></svg></div><svg class="ico" style="left:745px;top:764px" width="14" height="14" viewBox="0 0 512 512"><path fill="#2f82b5" d="M256 8C119.043 8 8 119.083 8 256c0 136.997 111.043 248 248 248s248-111.003 248-248C504 119.083 392.957 8 256 8zm0 110c23.196 0 42 18.804 42 42s-18.804 42-42 42-42-18.804-42-42 18.804-42 42-42zm56 254c0 6.627-5.373 12-12 12h-88c-6.627 0-12-5.373-12-12v-24c0-6.627 5.373-12 12-12h12v-64h-12c-6.627 0-12-5.373-12-12v-24c0-6.627 5.373-12 12-12h64c6.627 0 12 5.373 12 12v100h12c6.627 0 12 5.373 12 12v24z"/></svg>
  <div class="abs" style="left:624px;top:796px;white-space:nowrap">Flow rate modifier:</div><svg class="ico" style="left:742px;top:799px" width="14" height="14" viewBox="0 0 512 512"><path fill="#2f82b5" d="M256 8C119.043 8 8 119.083 8 256c0 136.997 111.043 248 248 248s248-111.003 248-248C504 119.083 392.957 8 256 8zm0 110c23.196 0 42 18.804 42 42s-18.804 42-42 42-42-18.804-42-42 18.804-42 42-42zm56 254c0 6.627-5.373 12-12 12h-88c-6.627 0-12-5.373-12-12v-24c0-6.627 5.373-12 12-12h12v-64h-12c-6.627 0-12-5.373-12-12v-24c0-6.627 5.373-12 12-12h64c6.627 0 12 5.373 12 12v100h12c6.627 0 12 5.373 12 12v24z"/></svg>
  <div class="inp" style="left:617px;top:822px;width:74px"><svg width="8" height="14" viewBox="0 0 8 14" style="position:absolute;left:53px;top:7px"><path d="M1,5 L4,2 L7,5 M1,9 L4,12 L7,9" fill="none" stroke="#8f8f9d" stroke-width="1.1"/></svg><span class="spbg" style="left:48px"></span></div>
  <div class="addon" style="left:690px;top:822px;width:28px">%</div>
  <div class="btn dis" style="left:717px;top:822px;width:46px;border-radius:0 4px 4px 0">Set</div>

  <div class="btn dis" style="left:782px;top:637px;width:75px">Motors off</div>
  <div class="btn" style="left:782px;top:677px;width:75px">Fan on</div>
  <div class="btn" style="left:782px;top:717px;width:75px">Fan off</div>
 </div>
</div></div>

<!-- ================= RIGHT WINDOW ================= -->
<div id="R" class="abs"><div class="wrap" style="left:-1075px;top:-10px">
 <div class="navbar" id="navR" style="left:1075px;width:940px">
  <svg class="ico" style="left:20px;top:11px" width="21" height="19" viewBox="0 0 21 19"><path d="M0.6,18.3 C-0.8,8 3,0.6 11,0.4 C16.5,0.3 20.3,4.2 20.3,9.3 C17.6,5.6 14.2,5.2 11.8,6.6 C9.2,8.2 10,12 11.2,18.3 Z" fill="#13c100"/><path d="M6.2,18.3 C4.6,12 5.2,7 9.2,5 C11.2,4 13.4,4 15.4,4.9 C12.2,5 9.8,6.6 9.6,9.2 C9.7,12 10.4,15 11.2,18.3 Z" fill="#0f9b00"/></svg>
  <div class="brand" style="left:45px;top:8px">OctoPrint</div>
  <div class="navtxt" style="left:323px">rPi: 71.5°C Tool: 195.4°C <span class="arr">⇘</span> 195.0°C Bed: 64.9°C <span class="arr">⇗</span> 65.0°C</div>
 </div>
 <div id="mainR">
  <div class="tabs" style="left:1075px;top:71px;width:620px">
   <a class="tab" style="left:0">Temperature</a>
   <a class="tab" style="left:106px">Control</a>
   <a class="tab active" style="left:179px">GCode Viewer</a>
   <a class="tab" style="left:297px"><svg width="16" height="14" viewBox="0 0 16 14" style="vertical-align:-2px;margin-right:4px"><rect x="0.900" y="0.900" width="14.200" height="9.200" rx="1" fill="none" stroke="#08c" stroke-width="1.800"/><path d="M6.300,10.500 H9.700 L10.200,12.400 H12 V13.800 H4 V12.400 H5.800Z" fill="#08c"/></svg>Terminal</a>
   <svg class="ico" style="left:580px;top:12px" width="26" height="12" viewBox="0 0 26 12"><g fill="#08c"><rect x="0" y="0.500" width="14" height="2"/><rect x="0" y="3.500" width="14" height="2"/><rect x="0" y="6.500" width="14" height="2"/><rect x="0" y="9.500" width="14" height="2"/><path d="M17,5 H25 L21,9Z"/></g></svg>
  </div>
  <svg class="ico" style="left:1091px;top:119px" width="568" height="568" viewBox="1091 119 568 568"><path d="M1109.6,160V646.4M1132.7,160V646.4M1155.8,160V646.4M1178.9,160V646.4M1202.0,160V646.4M1225.1,160V646.4M1248.2,160V646.4M1271.3,160V646.4M1294.4,160V646.4M1317.5,160V646.4M1340.6,160V646.4M1363.7,160V646.4M1386.8,160V646.4M1409.8,160V646.4M1432.9,160V646.4M1456.0,160V646.4M1479.1,160V646.4M1502.2,160V646.4M1525.3,160V646.4M1548.4,160V646.4M1571.5,160V646.4M1594.6,160V646.4M1617.7,160V646.4M1640.8,160V646.4M1091,160.0H1659M1091,183.1H1659M1091,206.3H1659M1091,229.4H1659M1091,252.5H1659M1091,275.6H1659M1091,298.8H1659M1091,321.9H1659M1091,345.0H1659M1091,368.2H1659M1091,391.3H1659M1091,414.4H1659M1091,437.6H1659M1091,460.7H1659M1091,483.8H1659M1091,506.9H1659M1091,530.1H1659M1091,553.2H1659M1091,576.3H1659M1091,599.5H1659M1091,622.6H1659M1091,645.7H1659" stroke="#c8c8c8" stroke-width="1.5" fill="none"/><path d="M1091,160H1659M1091,645.900H1659" stroke="#c2c2c2" stroke-width="2.800" fill="none"/><path d="M1264.100,219 H1437.700 V428.300 H1182.100 V276.400 H1264.100 Z M1437.700,341.800 H1578.400 V306.700 H1595.300 V340 L1588.500,349.500 A23.600,23.600 0 1 0 1624.300,349.500 L1617.400,340 V306.700 H1625.500 V283.500 H1638.200 V421.600 H1625.500 V398.100 H1578.400 V362.600 H1437.700 Z" fill="rgba(0,0,0,0.3)" stroke="#1c1c1c" stroke-width="2.200" stroke-linejoin="miter"/><path d="M1182.100,276.400 H1264.100 V247 L1437.700,420.600 V428.300 H1321.700 V578 H1379.300 V586.700 H1240.700 V578 H1299.200 V428.300 H1182.100 V363 H1172.500 V398.500 H1125.400 V421.700 H1111.800 V283 H1125.400 V306.500 H1133.300 V340 L1126.300,349.500 A23.300,23.300 0 1 0 1161.300,349.500 L1154.500,340 V306.500 H1172.500 V341.500 H1182.100 Z" fill="#000" fill-rule="evenodd"/><path d="M1185,300 L1312,427 M1185,322 L1290,427 M1185,392 L1220,427 M1195,277 L1345,427 M1215,277 L1365,427 M1265,262 L1430,427 M1300,440 L1320,460 M1302,650" stroke="#2c2c2c" stroke-width="0.600" fill="none"/><circle cx="1200.300" cy="295.100" r="4.300" fill="#fff"/><circle cx="1200.300" cy="410.600" r="4.300" fill="#fff"/><circle cx="1420.100" cy="295.200" r="5" fill="#fff" stroke="#000" stroke-width="1.800"/><circle cx="1420.100" cy="410.400" r="5" fill="#fff" stroke="#000" stroke-width="1.800"/><circle cx="1122.700" cy="288.900" r="2.600" fill="#00e800"/><path d="M1261.5,206.6 H1441.4 L1647.5,267.5 Q1654,269.500 1654,277 V430 Q1654,434.500 1650,437 L1385,598.300 H1240 Q1231,598.300 1225.700,592.500 L1098,434.500 Q1095.800,432 1095.800,429 V279 Q1095.800,273.500 1101,271.400 Z" fill="none" stroke="#0a0a0a" stroke-width="1.400"/></svg>
  <div class="abs" style="left:1664px;top:119px;width:12px;height:569px;border-radius:6px;background:linear-gradient(to right,#f1f1f1,#f8f8f8);box-shadow:inset 0 1px 2px rgba(0,0,0,.1)"></div>
  <div class="abs" style="left:1664.500px;top:678px;width:11px;height:10px;border-radius:0 0 6px 6px;background:#0a50cd"></div>
  <div class="knob" style="left:1662px;top:668px"></div>
  <div class="abs" style="left:1093px;top:699.500px;width:568px;height:11px;border-radius:6px;background:linear-gradient(to bottom,#f3f3f3,#f9f9f9);box-shadow:inset 0 1px 2px rgba(0,0,0,.1),inset 0 0 0 1px rgba(0,0,0,.04)"></div>
  <div class="abs" style="left:1093px;top:699.500px;width:357px;height:10.500px;border-radius:6px 0 0 6px;background:linear-gradient(to bottom,#0784d6,#0448cb)"></div>
  <div class="knob" style="left:1085px;top:697px"></div>
  <div class="knob" style="left:1441.500px;top:697px"></div>
  <div class="btn pri" style="left:1091px;top:719px;width:288px"><svg width="12.300" height="14" viewBox="0 0 448 512" style="vertical-align:-2px;margin-right:4px"><path fill="#fff" d="M257.5 445.1l-22.2 22.2c-9.4 9.4-24.6 9.4-33.9 0L7 273c-9.4-9.4-9.4-24.6 0-33.9L201.4 44.7c9.4-9.4 24.6-9.4 33.9 0l22.2 22.2c9.5 9.5 9.3 25-.4 34.3L136.6 216H424c13.3 0 24 10.7 24 24v32c0 13.3-10.7 24-24 24H136.6l120.5 114.8c9.8 9.3 10 24.8.4 34.3z"/></svg>Previous layer</div>
  <div class="btn pri" style="left:1391px;top:719px;width:288px">Next layer<svg width="12.300" height="14" viewBox="0 0 448 512" style="vertical-align:-2px;margin-left:4px;transform:rotate(180deg)"><path fill="#fff" d="M257.5 445.1l-22.2 22.2c-9.4 9.4-24.6 9.4-33.9 0L7 273c-9.4-9.4-9.4-24.6 0-33.9L201.4 44.7c9.4-9.4 24.6-9.4 33.9 0l22.2 22.2c9.5 9.5 9.3 25-.4 34.3L136.6 216H424c13.3 0 24 10.7 24 24v32c0 13.3-10.7 24-24 24H136.6l120.5 114.8c9.8 9.3 10 24.8.4 34.3z"/></svg></div>
  <div class="abs" style="left:1091px;top:756px;width:588px;height:20px;border-radius:4px;background:linear-gradient(to bottom,#149bdf,#0480be);color:#fff;font-size:12px;line-height:18px;text-align:center;text-shadow:0 -1px 0 rgba(0,0,0,.25)">Ready!</div>
  <h1 style="left:1091px;top:806px;width:338px">Model info</h1>
  <h1 style="left:1441px;top:806px;width:238px">Renderer options</h1>
  <div class="abs rl" style="top:865px">Model size: 245.68mm × 192.74mm × 18.00mm</div>
  <div class="abs rl" style="top:885px">Estimated layer height: 0.14mm</div>
  <div class="abs rl" style="top:905px">Estimated total print time: 03:45:38</div>
  <div class="abs rl" style="top:925px">Layers with extrusion: 129</div>
  <h1 style="left:1091px;top:957px;width:338px">Layer info</h1>
  <div class="abs" style="left:1441px;top:869px;width:13px;height:13px;border-radius:2px;background:#0a6cdc"><svg width="13" height="13" viewBox="0 0 13 13" style="position:absolute;left:0;top:0"><path d="M3,6.800 L5.500,9.300 L10.200,3.500" fill="none" stroke="#fff" stroke-width="1.900"/></svg></div><div class="abs rl" style="left:1461px;top:865px">Sync with job progress</div>
  <div class="abs" style="left:1441px;top:899px;width:13px;height:13px;border-radius:2px;background:#0a6cdc"><svg width="13" height="13" viewBox="0 0 13 13" style="position:absolute;left:0;top:0"><path d="M3,6.800 L5.500,9.300 L10.200,3.500" fill="none" stroke="#fff" stroke-width="1.900"/></svg></div><div class="abs rl" style="left:1461px;top:895px">Center viewport on model</div>
  <div class="abs" style="left:1441px;top:924px;width:13px;height:13px;border-radius:2px;background:#0a6cdc"><svg width="13" height="13" viewBox="0 0 13 13" style="position:absolute;left:0;top:0"><path d="M3,6.800 L5.500,9.300 L10.200,3.500" fill="none" stroke="#fff" stroke-width="1.900"/></svg></div><div class="abs rl" style="left:1461px;top:920px">Zoom in on model</div>
  <div class="abs" style="left:1441px;top:954px;width:11px;height:11px;border-radius:2px;background:#fff;border:1px solid #8f8f9d"></div><div class="abs rl" style="left:1461px;top:950px">Show moves</div>
  <div class="abs" style="left:1441px;top:979px;width:11px;height:11px;border-radius:2px;background:#fff;border:1px solid #8f8f9d"></div><div class="abs rl" style="left:1461px;top:975px">Show retracts</div>
 </div>
</div></div>

<div class="abs" style="left:1067px;top:12px;width:3px;height:625px;border-radius:2px;background:#7d7f81"></div>
<div id="divblue" class="abs"></div><div id="divblk" class="abs"></div>
<div id="botL" class="abs"></div><div id="botR" class="abs"></div><div id="edgeR" class="abs"></div>
</body>
</html>
